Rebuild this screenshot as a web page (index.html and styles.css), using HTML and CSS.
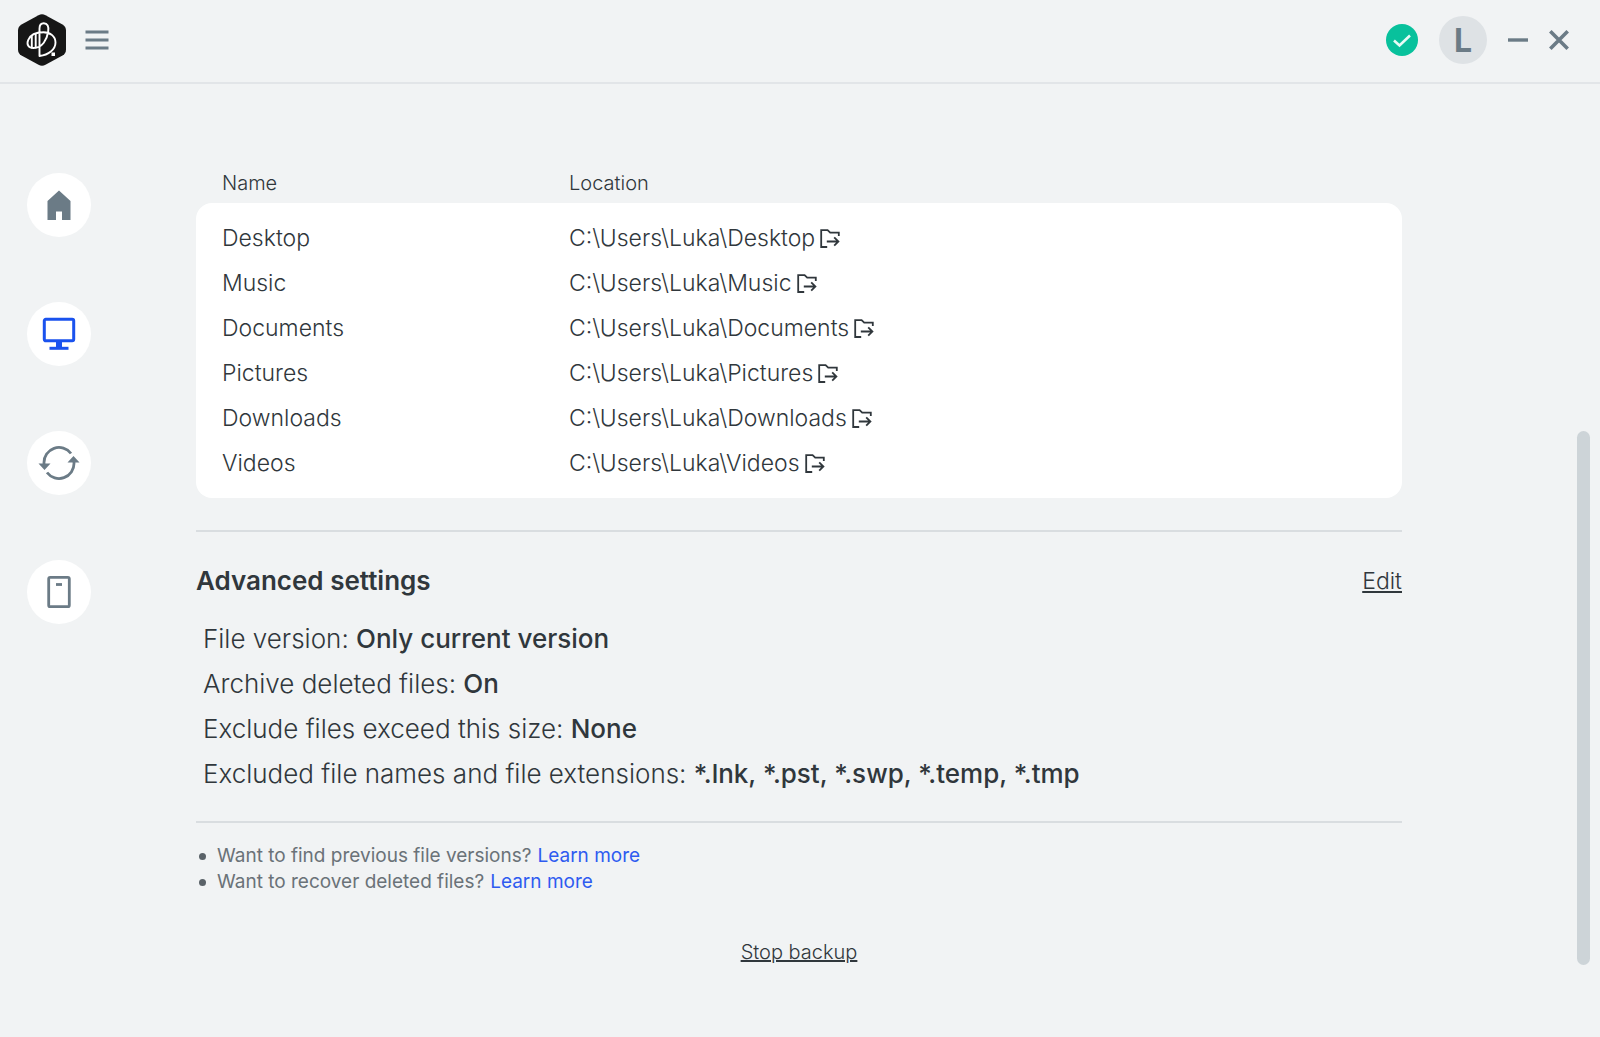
FILE: index.html
```html
<!DOCTYPE html>
<html lang="en">
<head>
    <meta charset="UTF-8">
    <meta name="viewport" content="width=device-width, initial-scale=1.0">
    <title>Backup settings</title>
    <link rel="stylesheet" href="styles.css">
</head>
<body>
    <!-- shared icons -->
    <svg class="sprite" width="0" height="0" aria-hidden="true">
        <symbol id="open-folder" viewBox="0 0 22 20">
            <path d="M18.8 7V3.7H10.2L7.6 1.2H1.2V18H7.2M6.8 12.5H18M14.2 8.3L18.4 12.5L14.2 16.7" fill="none" stroke="currentColor" stroke-width="1.8"/>
        </symbol>
    </svg>

    <header class="topbar">
        <div class="topbar-group brand">
            <svg class="logo" viewBox="0 0 50 54" aria-label="Logo">
                <path d="M21.5 2.2Q25 0.400 28.500 2.200L45.500 11.500Q49 13.500 49 17.500V36.500Q49 40.500 45.500 42.500L28.500 51.800Q25 53.600 21.500 51.800L4.500 42.500Q1 40.500 1 36.500V17.500Q1 13.500 4.500 11.500Z" fill="#161616"/>
                <g fill="none" stroke="#fff" stroke-width="1.900" stroke-linecap="round" stroke-linejoin="round">
                    <path d="M22.500 43V15.500C22.500 12 24 10.300 26.800 10.300C30.500 10.300 32 13.500 31.200 18.500C30 26.500 25.500 35 16.500 35C11.500 35 9.300 31.500 11.200 27C13.500 21.500 20 19.300 26.500 19.300C33.500 19.300 38.500 23.500 38.500 29.500C38.500 36.500 31.500 42 22.500 43Z"/>
                    <path d="M14.800 23.500V34.500M18.700 21.500V34.500"/>
                </g>
                <rect x="34.500" y="39.500" width="3.500" height="3.500" fill="#fff"/>
            </svg>
            <button class="icon-button" aria-label="Menu">
                <svg width="24" height="20" viewBox="0 0 24 20">
                    <path d="M0.500 2H23.500M0.500 10H23.500M0.500 18H23.500" stroke="currentColor" stroke-width="2.800"/>
                </svg>
            </button>
        </div>
        <div class="topbar-group">
            <svg class="status" viewBox="0 0 32 32" aria-label="Up to date">
                <circle cx="16" cy="16" r="16" fill="#08c19c"/>
                <path d="M8 16.500L13.500 21.500L24 11.500" fill="none" stroke="#e8fbf6" stroke-width="2.600"/>
            </svg>
            <button class="avatar">L</button>
            <button class="icon-button" aria-label="Minimize">
                <svg width="20" height="20" viewBox="0 0 20 20">
                    <path d="M0 10H20" stroke="currentColor" stroke-width="3.400"/>
                </svg>
            </button>
            <button class="icon-button" aria-label="Close">
                <svg width="20" height="20" viewBox="0 0 20 20">
                    <path d="M1.300 1.300L18.700 18.700M18.700 1.300L1.300 18.700" stroke="currentColor" stroke-width="3.600"/>
                </svg>
            </button>
        </div>
    </header>

    <div class="layout">
        <nav class="sidebar">
            <button class="nav-button" aria-label="Home">
                <svg width="34" height="34" viewBox="0 0 34 34">
                    <path d="M17 2.500L28.500 13V32H20V23.500H14V32H5.500V13Z" fill="currentColor"/>
                </svg>
            </button>
            <button class="nav-button active" aria-label="Computer backup">
                <svg width="34" height="34" viewBox="0 0 34 34">
                    <rect x="2.300" y="2.300" width="29.400" height="21.500" rx="1.500" fill="none" stroke="currentColor" stroke-width="3"/>
                    <path d="M14 24H20V30H14Z" fill="currentColor"/>
                    <path d="M7.500 31.300H26.500" stroke="currentColor" stroke-width="3"/>
                </svg>
            </button>
            <button class="nav-button" aria-label="Sync">
                <svg width="42" height="34" viewBox="0 0 42 34">
                    <path d="M33 7.500A15 15 0 0 0 6 17V19M9 26.500A15 15 0 0 0 36 17V15" fill="none" stroke="currentColor" stroke-width="2.800"/>
                    <path d="M0.500 17.500H12.500L6.500 24ZM29.500 16.500H41.500L35.500 10Z" fill="currentColor"/>
                </svg>
            </button>
            <button class="nav-button" aria-label="Device">
                <svg width="34" height="34" viewBox="0 0 34 34">
                    <rect x="6.700" y="2.300" width="20.600" height="29.400" rx="1.500" fill="none" stroke="currentColor" stroke-width="2.800"/>
                    <path d="M14 9.500H20" stroke="currentColor" stroke-width="2.800"/>
                </svg>
            </button>
        </nav>

        <main class="content">
            <table class="folders">
                <thead>
                    <tr><th class="name">Name</th><th>Location</th></tr>
                </thead>
                <tbody>
                    <tr><td>Desktop</td><td>C:\Users\Luka\Desktop<svg class="open"><use href="#open-folder"/></svg></td></tr>
                    <tr><td>Music</td><td>C:\Users\Luka\Music<svg class="open"><use href="#open-folder"/></svg></td></tr>
                    <tr><td>Documents</td><td>C:\Users\Luka\Documents<svg class="open"><use href="#open-folder"/></svg></td></tr>
                    <tr><td>Pictures</td><td>C:\Users\Luka\Pictures<svg class="open"><use href="#open-folder"/></svg></td></tr>
                    <tr><td>Downloads</td><td>C:\Users\Luka\Downloads<svg class="open"><use href="#open-folder"/></svg></td></tr>
                    <tr><td>Videos</td><td>C:\Users\Luka\Videos<svg class="open"><use href="#open-folder"/></svg></td></tr>
                </tbody>
            </table>

            <section class="advanced">
                <div class="advanced-header">
                    <h2>Advanced settings</h2>
                    <a href="#" class="edit">Edit</a>
                </div>
                <p>File version: <strong>Only current version</strong></p>
                <p>Archive deleted files: <strong>On</strong></p>
                <p>Exclude files exceed this size: <strong>None</strong></p>
                <p>Excluded file names and file extensions: <strong>*.lnk, *.pst, *.swp, *.temp, *.tmp</strong></p>
            </section>

            <ul class="tips">
                <li>Want to find previous file versions? <a href="#">Learn more</a></li>
                <li>Want to recover deleted files? <a href="#">Learn more</a></li>
            </ul>

            <a href="#" class="stop">Stop backup</a>
        </main>

        <div class="scroll-track">
            <div class="scroll-thumb"></div>
        </div>
    </div>
</body>
</html>
```
FILE: styles.css
```css
* {
    box-sizing: border-box;
}
body {
    margin: 0;
    min-height: 100vh;
    display: flex;
    flex-direction: column;
    background: #f1f3f4;
    color: #30373c;
    font-family: Inter, "Liberation Sans", sans-serif;
    font-size: 23px;
    font-weight: 300;
}
button {
    border: none;
    padding: 0;
    background: none;
    font-family: inherit;
    cursor: pointer;
}
a {
    color: inherit;
}
svg {
    display: block;
}
.sprite {
    position: absolute;
}

/* top bar */
.topbar {
    display: flex;
    justify-content: space-between;
    align-items: center;
    height: 84px;
    padding: 0 31px 2px 17px;
    border-bottom: 2px solid #e2e5e8;
}
.topbar-group {
    display: flex;
    align-items: center;
    gap: 21px;
}
.brand {
    gap: 18px;
}
.logo {
    width: 50px;
    height: 54px;
}
.icon-button {
    display: flex;
    color: #6b7b86;
}
.status {
    width: 32px;
    height: 32px;
}
.avatar {
    width: 48px;
    height: 48px;
    border-radius: 50%;
    background: #dee2e5;
    color: #6b7b86;
    font-size: 32px;
    font-weight: 700;
}

/* page body */
.layout {
    flex: 1;
    display: flex;
}
.sidebar {
    width: 196px;
    padding: 89px 0 0 27px;
    display: flex;
    flex-direction: column;
    gap: 65px;
}
.nav-button {
    width: 64px;
    height: 64px;
    border-radius: 50%;
    background: #fff;
    color: #6b7b86;
    display: flex;
    align-items: center;
    justify-content: center;
}
.nav-button.active {
    color: #1a52ee;
}
.content {
    flex: 1;
    padding-top: 82px;
    display: flex;
    flex-direction: column;
}

/* folder list */
.folders {
    width: 100%;
    border-spacing: 0;
    text-align: left;
}
.folders th {
    height: 37px;
    padding: 0 0 3px;
    font-size: 20px;
    font-weight: 300;
}
.folders .name {
    width: 373px;
}
.folders td {
    height: 45px;
    padding: 0;
    background: #fff;
}
.folders th:first-child,
.folders td:first-child {
    padding-left: 26px;
}
.folders tbody tr:first-child td {
    height: 57px;
    padding-top: 12px;
}
.folders tbody tr:last-child td {
    height: 58px;
    padding-bottom: 13px;
}
.folders tr:first-child td:first-child {
    border-top-left-radius: 16px;
}
.folders tr:first-child td:last-child {
    border-top-right-radius: 16px;
}
.folders tr:last-child td:first-child {
    border-bottom-left-radius: 16px;
}
.folders tr:last-child td:last-child {
    border-bottom-right-radius: 16px;
}
.open {
    display: inline-block;
    width: 22px;
    height: 20px;
    margin-left: 5px;
    vertical-align: -3px;
}

/* advanced settings */
.advanced {
    margin-top: 32px;
    padding: 26px 0 25px;
    border-top: 2px solid #d9dde0;
    border-bottom: 2px solid #d9dde0;
    font-size: 26px;
}
.advanced-header {
    display: flex;
    justify-content: space-between;
    align-items: center;
    height: 45px;
    margin-bottom: 13px;
}
.advanced h2 {
    margin: 0;
    font-size: 26px;
    font-weight: 600;
}
.edit {
    font-size: 23px;
}
.advanced p {
    margin: 0;
    padding-left: 7px;
    line-height: 45px;
}
.advanced strong {
    font-weight: 550;
}

/* footer links */
.tips {
    margin: 20px 0 0;
    padding-left: 3px;
    color: #6a7278;
    font-size: 19px;
    font-weight: 400;
    line-height: 26px;
    list-style: none;
}
.tips li {
    display: flex;
    align-items: center;
    gap: 6px;
}
.tips li::before {
    content: "";
    width: 7px;
    height: 7px;
    margin-right: 5px;
    border-radius: 50%;
    background: #5a6268;
}
.tips a {
    color: #2e5bf0;
    text-decoration: none;
}
.stop {
    align-self: center;
    margin-top: 44px;
    font-size: 20px;
    line-height: 26px;
}

/* scrollbar */
.scroll-track {
    width: 198px;
    padding: 347px 10px 72px 0;
    display: flex;
    justify-content: flex-end;
}
.scroll-thumb {
    width: 13px;
    border-radius: 7px;
    background: #cdd4d8;
}
```
